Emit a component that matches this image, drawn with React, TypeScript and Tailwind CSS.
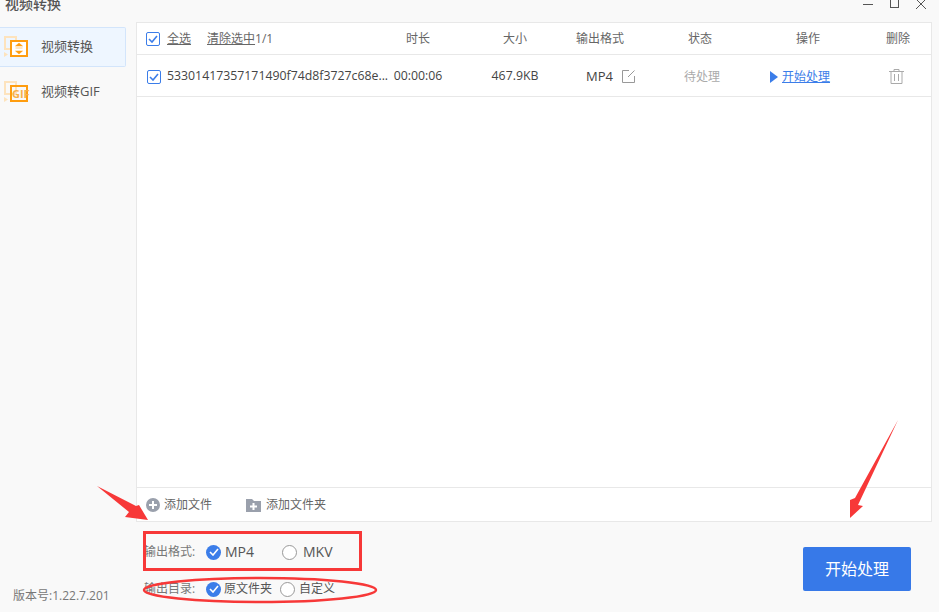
import React from 'react'

const font = "font-['Open_Sans','Noto_Sans_CJK_SC',sans-serif]"

function Check({ className = '' }: { className?: string }) {
  return (
    <span className={`flex w-[14px] h-[14px] shrink-0 items-center justify-center rounded-[2px] border border-[#3b7de9] bg-white ${className}`}>
      <svg width="10" height="8" viewBox="0 0 10 8" fill="none">
        <path d="M1 4l3 3 5-6" stroke="#3b7de9" strokeWidth="1.6" />
      </svg>
    </span>
  )
}

function Radio({ checked = false }: { checked?: boolean }) {
  if (!checked) {
    return <span className="block w-[15px] h-[15px] shrink-0 rounded-full border border-[#999] bg-white" />
  }
  return (
    <span className="flex w-[15px] h-[15px] shrink-0 items-center justify-center rounded-full bg-[#3b7de9]">
      <svg width="10" height="8" viewBox="0 0 10 8" fill="none">
        <path d="M1 4l3 3 5-6" stroke="#fff" strokeWidth="1.6" />
      </svg>
    </span>
  )
}

function VideoIcon({ gif = false }: { gif?: boolean }) {
  return (
    <svg width="24" height="24" viewBox="0 0 24 24" fill="none" className="shrink-0">
      <rect x="1" y="2" width="11" height="12" stroke="#fde3bd" strokeWidth="2" />
      <path d="M0 17l4 2.500L0 22z" fill="#fde3bd" />
      <rect x="7" y="6" width="16" height="15" fill={gif ? 'none' : '#fff'} stroke="#ff9d0f" strokeWidth="2" />
      {!gif && <path d="M15 8l3.500 3h-7zM11.500 13h7M15 19l-3.500-3h7z" fill="#ff9d0f" stroke="#ff9d0f" strokeWidth="0.5" />}
    </svg>
  )
}

function Sidebar() {
  return (
    <div className="flex flex-col w-[136px] shrink-0">
      <div className="mt-[5px] mr-[10px] h-[40px] flex items-center gap-[13px] pl-[4px] rounded-r-[2px] bg-[#eef6ff] border-y border-r border-[#d3e5fb]">
        <VideoIcon />
        <span className="text-[13px] text-[#555]">视频转换</span>
      </div>
      <div className="mt-[5px] h-[40px] flex items-center gap-[13px] pl-[4px] relative">
        <VideoIcon gif />
        <span className="absolute left-[12px] top-[14px] text-[11px] font-bold text-[#f7b04a]">GIF</span>
        <span className="text-[13px] text-[#555]">视频转GIF</span>
      </div>
      <div className="mt-auto mb-[7px] pl-[13px] text-[12px] text-[#777]">版本号:1.22.7.201</div>
    </div>
  )
}

const cols = 'grid grid-cols-[256px_50px_109px_96px_104px_112px_68px] items-center'

function FileTable() {
  return (
    <div className="flex flex-col flex-1 mr-[7px] border border-[#e8e8e8] bg-white text-[12px] text-[#666]">
      <div className={`${cols} h-[32px] border-b border-[#e8e8e8]`}>
        <div className="flex items-center pl-[9px]">
          <Check />
          <span className="ml-[7px] underline">全选</span>
          <span className="ml-[16px] underline">清除选中</span>
          <span>1/1</span>
        </div>
        <span className="text-center">时长</span>
        <span className="text-center pl-[35px]">大小</span>
        <span className="text-center">输出格式</span>
        <span className="text-center">状态</span>
        <span className="text-center">操作</span>
        <span className="text-center">删除</span>
      </div>
      <div className={`${cols} h-[42px] pt-[2px] border-b border-[#e8e8e8] text-[12.3px] text-[#444]`}>
        <div className="flex items-center pl-[10px]">
          <Check />
          <span className="ml-[6px] whitespace-nowrap">53301417357171490f74d8f3727c68e...</span>
        </div>
        <span className="text-center whitespace-nowrap">00:00:06</span>
        <span className="text-center pl-[35px]">467.9KB</span>
        <div className="flex items-center gap-[9px] pl-[34px]">
          <span className="text-[13px]">MP4</span>
          <svg width="13" height="13" viewBox="0 0 13 13" fill="none" stroke="#999">
            <path d="M7 .5H.5v12h12V6M12.5.5L6 7" />
          </svg>
        </div>
        <span className="text-center pl-[4px] text-[12px] text-[#aaa]">待处理</span>
        <div className="flex items-center gap-[4px] pl-[18px] text-[12px] text-[#3b7de9]">
          <svg width="8" height="12" viewBox="0 0 8 12">
            <path d="M0 0l8 6-8 6z" fill="#3b7de9" />
          </svg>
          <span className="underline">开始处理</span>
        </div>
        <div className="flex justify-center pr-[4px]">
          <svg width="15" height="15" viewBox="0 0 15 15" fill="none" stroke="#aaa">
            <path d="M0 2.500h15M5 2.500V.5h5v2M2 2.500v12h11v-12M5.500 5v7M9.500 5v7" />
          </svg>
        </div>
      </div>
      <div className="flex-1" />
      <div className="flex items-center h-[34px] pt-[1px] border-t border-[#e8e8e8] pl-[9px]">
        <svg width="14" height="14" viewBox="0 0 14 14">
          <circle cx="7" cy="7" r="7" fill="#9aa0ac" />
          <path d="M7 3v8M3 7h8" stroke="#fff" strokeWidth="2" />
        </svg>
        <span className="ml-[4px]">添加文件</span>
        <svg width="15" height="13" viewBox="0 0 15 13" className="ml-[34px]">
          <path d="M0 0h6l2 2h7v11H0z" fill="#9aa0ac" />
          <path d="M7.500 4v7M4 7.500h7" stroke="#fff" strokeWidth="2" />
        </svg>
        <span className="ml-[5px]">添加文件夹</span>
      </div>
    </div>
  )
}

function BottomBar() {
  return (
    <div className="relative h-[90px] shrink-0 flex items-start justify-between pl-[8px] pr-[28px] text-[#666]">
      <div className="flex flex-col">
        <div className="flex items-center h-[20px] mt-[20px] text-[12px]">
          <span className="w-[62px] text-[#777]">输出格式:</span>
          <Radio checked />
          <span className="ml-[4px] text-[14px] leading-[20px] text-[#555]">MP4</span>
          <span className="ml-[28px]"><Radio /></span>
          <span className="ml-[6px] text-[14px] leading-[20px] text-[#555]">MKV</span>
        </div>
        <div className="flex items-center h-[20px] mt-[17px] text-[12px]">
          <span className="w-[62px] text-[#777]">输出目录:</span>
          <Radio checked />
          <span className="ml-[3px] text-[#555]">原文件夹</span>
          <span className="ml-[8px]"><Radio /></span>
          <span className="ml-[4px] text-[#555]">自定义</span>
        </div>
      </div>
      <button className="mt-[25px] w-[108px] h-[44px] rounded-[2px] bg-[#3779e8] text-[16px] text-white">开始处理</button>
    </div>
  )
}

function Annotations() {
  return (
    <svg className="absolute inset-0 pointer-events-none" width="939" height="612" viewBox="0 0 939 612" fill="none">
      <path d="M97 486L136 506 139 505 148 520 125 517 129 512z" fill="#f73838" />
      <path d="M898 420L858 505 863 506 850 518 850 500 855 498z" fill="#f73838" />
      <rect x="144.500" y="532.500" width="216" height="37" stroke="#f73838" strokeWidth="3" />
      <ellipse cx="260" cy="590" rx="116" ry="12" stroke="#f73838" strokeWidth="2.500" />
    </svg>
  )
}

export default function App() {
  return (
    <div className={`relative flex flex-col w-[939px] h-[612px] overflow-hidden bg-[#f9f9f9] ${font}`}>
      <div className="flex justify-between h-[22px] shrink-0">
        <span className="ml-[5px] -mt-[6px] text-[14px] leading-[20px] font-medium text-[#555]">视频转换</span>
        <div className="flex items-start gap-[17px] pr-[13px]">
          <span className="block mt-[4px] w-[10px] h-px bg-[#555]" />
          <span className="block -mt-[2px] w-[9px] h-[10px] border border-[#555]" />
          <svg width="10" height="9" viewBox="0 0 10 9" stroke="#555" fill="none">
            <path d="M0 -1l10 10M10 -1L0 9" />
          </svg>
        </div>
      </div>
      <div className="flex flex-1 min-h-0">
        <Sidebar />
        <div className="flex flex-col flex-1 min-w-0">
          <FileTable />
          <BottomBar />
        </div>
      </div>
      <Annotations />
    </div>
  )
}
